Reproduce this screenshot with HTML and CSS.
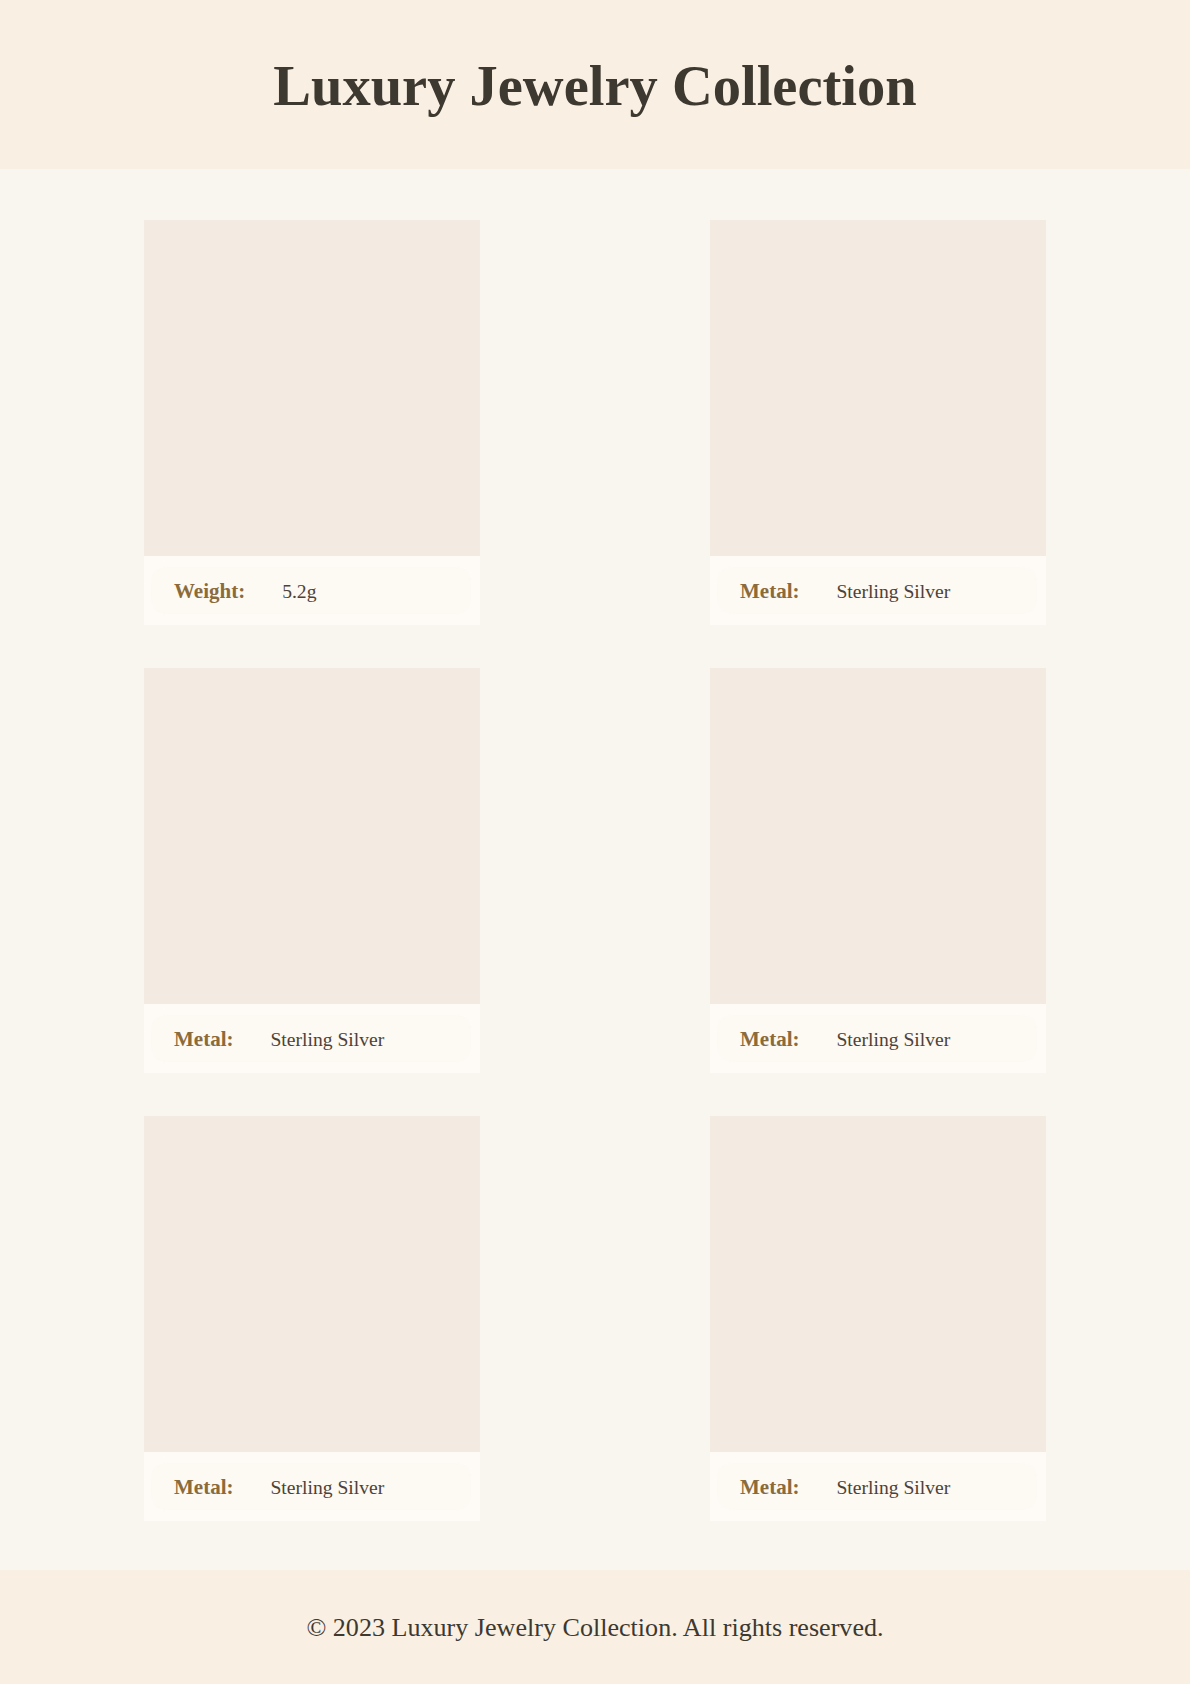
FILE: index.html
```html
<!DOCTYPE html>
<html lang="en">
<head>
<meta charset="utf-8">
<title>Luxury Jewelry Collection</title>
<link rel="stylesheet" href="styles.css">
</head>
<body>
<header class="site-header">
  <h1 class="site-title">Luxury Jewelry Collection</h1>
</header>
<main class="gallery">
  <div class="grid">
    <article class="card">
      <div class="card-image"></div>
      <div class="card-info"><div class="spec"><span class="spec-label">Weight:</span><span class="spec-value">5.2g</span></div></div>
    </article>
    <article class="card">
      <div class="card-image"></div>
      <div class="card-info"><div class="spec"><span class="spec-label">Metal:</span><span class="spec-value">Sterling Silver</span></div></div>
    </article>
    <article class="card">
      <div class="card-image"></div>
      <div class="card-info"><div class="spec"><span class="spec-label">Metal:</span><span class="spec-value">Sterling Silver</span></div></div>
    </article>
    <article class="card">
      <div class="card-image"></div>
      <div class="card-info"><div class="spec"><span class="spec-label">Metal:</span><span class="spec-value">Sterling Silver</span></div></div>
    </article>
    <article class="card">
      <div class="card-image"></div>
      <div class="card-info"><div class="spec"><span class="spec-label">Metal:</span><span class="spec-value">Sterling Silver</span></div></div>
    </article>
    <article class="card">
      <div class="card-image"></div>
      <div class="card-info"><div class="spec"><span class="spec-label">Metal:</span><span class="spec-value">Sterling Silver</span></div></div>
    </article>
  </div>
</main>
<footer class="site-footer">
  <p class="footer-text">© 2023 Luxury Jewelry Collection. All rights reserved.</p>
</footer>
</body>
</html>
```
FILE: styles.css
```css
* { box-sizing: border-box; }
html, body { margin: 0; padding: 0; }
body {
  background: #f9f6f0;
  font-family: Georgia, "Liberation Serif", "Times New Roman", serif;
  color: #4a3f35;
}
.site-header {
  background: #f9f0e3;
  height: 169px;
  display: flex;
  align-items: center;
  justify-content: center;
}
.site-title {
  margin: 0;
  font-size: 56.5px;
  font-weight: 700;
  color: #3d3830;
  line-height: 1;
  padding-top: 3px;
}
.gallery {
  padding: 51px 0 49px;
}
.grid {
  width: 902px;
  margin: 0 auto;
  display: grid;
  grid-template-columns: 336px 336px;
  justify-content: space-between;
  row-gap: 43px;
}
.card {
  background: #fefbf7;
  display: flex;
  flex-direction: column;
}
.card-image {
  height: 336px;
  background: #f3ebe2;
}
.card-info {
  height: 69px;
  padding: 12px 10px 12px 8px;
  display: flex;
}
.spec {
  flex: 1;
  display: flex;
  align-items: center;
  padding-left: 22px;
  padding-top: 2px;
  border-radius: 14px;
  background: #fdf9f3;
  box-shadow: 0 0 3px rgba(200, 180, 150, 0.08);
}
.spec-label {
  font-weight: 700;
  font-size: 21px;
  color: #8b6b3b;
  margin-right: 37px;
}
.spec-value {
  font-size: 19.6px;
  color: #4e4237;
}
.site-footer {
  background: #f9f0e3;
  height: 114px;
  display: flex;
  align-items: center;
  justify-content: center;
}
.footer-text {
  margin: 0;
  font-size: 26.1px;
  color: #3d3830;
  padding-top: 1px;
}
```
